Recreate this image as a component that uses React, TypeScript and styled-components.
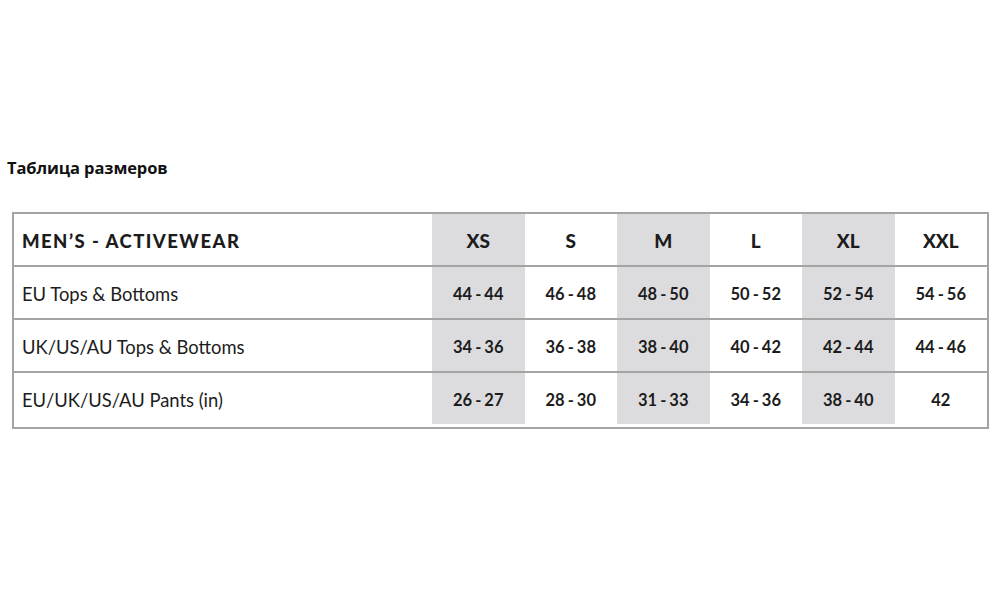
import styled, { createGlobalStyle } from 'styled-components';

let Global = createGlobalStyle`
  html, body {
    margin: 0;
    padding: 0;
    background: #fff;
  }
  * {
    box-sizing: border-box;
  }
`;

let Page = styled.main`
  width: 1000px;
  height: 599px;
  padding: 157px 0 0 12px;
  background: #fff;
`;

let Title = styled.h2`
  margin: 0 0 34px -5px;
  font-family: 'Open Sans', 'Liberation Sans', sans-serif;
  font-size: 16.5px;
  font-weight: 700;
  line-height: 21px;
  letter-spacing: -0.1px;
  color: #111;
`;

let Table = styled.div`
  width: 977px;
  border: 2px solid #a4a4a4;
  padding-bottom: 3px;
  font-family: Lato, 'Open Sans', sans-serif;
  color: #1c1c1c;
`;

let Row = styled.div<{ $head?: boolean }>`
  display: grid;
  grid-template-columns: 418px repeat(6, 1fr);
  height: ${(p) => (p.$head ? '51px' : '53px')};
  & + & {
    border-top: 2px solid #a4a4a4;
  }
`;

let Label = styled.div<{ $head?: boolean }>`
  display: flex;
  align-items: center;
  padding-left: 8px;
  font-size: ${(p) => (p.$head ? '18.5px' : '18.4px')};
  font-weight: ${(p) => (p.$head ? 900 : 400)};
  letter-spacing: ${(p) => (p.$head ? '1.45px' : '0')};
  padding-top: 2px;
`;

let Cell = styled.div<{ $shaded?: boolean; $head?: boolean }>`
  display: flex;
  align-items: center;
  justify-content: center;
  background: ${(p) => (p.$shaded ? '#dcdcdf' : '#fff')};
  font-size: ${(p) => (p.$head ? '19px' : '16.5px')};
  font-weight: ${(p) => (p.$head ? 900 : 700)};
  word-spacing: ${(p) => (p.$head ? '0' : '-1px')};
  padding-top: 2px;
`;

let sizes = ['XS', 'S', 'M', 'L', 'XL', 'XXL'];

let rows = [
  { label: 'EU Tops & Bottoms', values: ['44 - 44', '46 - 48', '48 - 50', '50 - 52', '52 - 54', '54 - 56'] },
  { label: 'UK/US/AU Tops & Bottoms', values: ['34 - 36', '36 - 38', '38 - 40', '40 - 42', '42 - 44', '44 - 46'] },
  { label: 'EU/UK/US/AU Pants (in)', values: ['26 - 27', '28 - 30', '31 - 33', '34 - 36', '38 - 40', '42'] }
];

export default function App() {
  return (
    <>
      <Global />
      <Page>
        <Title>Таблица размеров</Title>
        <Table>
          <Row $head>
            <Label $head>MEN’S - ACTIVEWEAR</Label>
            {sizes.map((s, i) => (
              <Cell key={s} $head $shaded={i % 2 === 0}>
                {s}
              </Cell>
            ))}
          </Row>
          {rows.map((r) => (
            <Row key={r.label}>
              <Label>{r.label}</Label>
              {r.values.map((v, i) => (
                <Cell key={i} $shaded={i % 2 === 0}>
                  {v}
                </Cell>
              ))}
            </Row>
          ))}
        </Table>
      </Page>
    </>
  );
}
